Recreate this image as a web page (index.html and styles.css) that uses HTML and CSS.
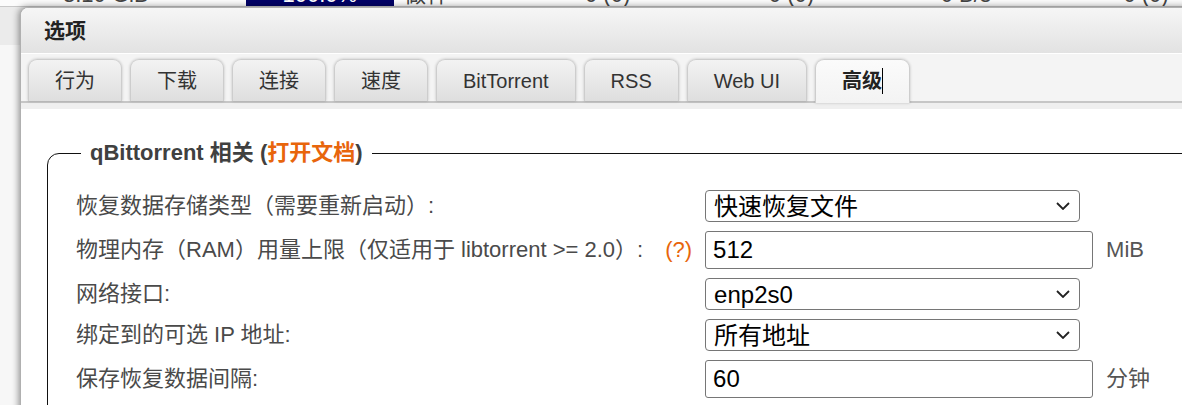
FILE: index.html
```html
<!DOCTYPE html>
<html lang="zh-CN">
<head>
<meta charset="utf-8">
<title>选项</title>
<link rel="stylesheet" href="styles.css">
</head>
<body>
<div class="page">
  <div class="bg-row">
    <div class="bg-row-inner">
      <div class="cell c1">3.10 GiB</div>
      <div class="cell c2">100.0%</div>
      <div class="cell c3">做种</div>
      <div class="cell c4">0 (0)</div>
      <div class="cell c5">0 (0)</div>
      <div class="cell c6">0 B/s</div>
      <div class="cell c7">0 (0)</div>
    </div>
  </div>
  <div class="bg-toolbar"></div>
</div>

<div class="window">
  <div class="titlebar">选项</div>
  <div class="tabbar">
    <div class="tab">行为</div>
    <div class="tab">下载</div>
    <div class="tab">连接</div>
    <div class="tab">速度</div>
    <div class="tab">BitTorrent</div>
    <div class="tab">RSS</div>
    <div class="tab">Web UI</div>
    <div class="tab active">高级<span class="caret"></span></div>
  </div>
  <div class="content">
    <fieldset class="group">
      <legend class="legend">qBittorrent 相关 (<a class="doc">打开文档</a>)</legend>
      <div class="rows">
        <label class="lbl">恢复数据存储类型（需要重新启动）:</label>
        <span class="selwrap">
          <select class="ctl sel"><option>快速恢复文件</option></select>
          <svg class="chev" width="14" height="8" viewBox="0 0 14 8"><path d="M1 1 L7 7 L13 1" fill="none" stroke="#222" stroke-width="1.8"/></svg>
        </span>
        <span class="unit"></span>

        <label class="lbl">物理内存（RAM）用量上限（仅适用于 libtorrent &gt;= 2.0）:<span class="help">(?)</span></label>
        <input class="ctl txt" type="text" value="512">
        <span class="unit">MiB</span>

        <label class="lbl">网络接口:</label>
        <span class="selwrap">
          <select class="ctl sel"><option>enp2s0</option></select>
          <svg class="chev" width="14" height="8" viewBox="0 0 14 8"><path d="M1 1 L7 7 L13 1" fill="none" stroke="#222" stroke-width="1.8"/></svg>
        </span>
        <span class="unit"></span>

        <label class="lbl">绑定到的可选 IP 地址:</label>
        <span class="selwrap">
          <select class="ctl sel"><option>所有地址</option></select>
          <svg class="chev" width="14" height="8" viewBox="0 0 14 8"><path d="M1 1 L7 7 L13 1" fill="none" stroke="#222" stroke-width="1.8"/></svg>
        </span>
        <span class="unit"></span>

        <label class="lbl">保存恢复数据间隔:</label>
        <input class="ctl txt" type="text" value="60">
        <span class="unit">分钟</span>
      </div>
    </fieldset>
  </div>
</div>
</body>
</html>
```

FILE: styles.css
```css
html, body {
  margin: 0;
  padding: 0;
  overflow: hidden;
}

body {
  width: 1182px;
  height: 405px;
  position: relative;
  background: #f7f7f7;
  font-family: "Liberation Sans", "Noto Sans CJK SC", sans-serif;
}

.bg-row {
  height: 6px;
  border-bottom: 1px solid #c8c8c8;
  background: #fbfbfb;
  overflow: hidden;
}

.bg-row-inner {
  display: flex;
  margin-top: -20px;
  height: 30px;
  line-height: 30px;
  font-size: 22px;
  color: #444;
  white-space: nowrap;
}

.cell {
  box-sizing: border-box;
}

.c1 { width: 250px; padding-left: 63px; }
.c2 { width: 152px; background: #000066; color: #fff; text-align: center; }
.c3 { width: 185px; padding-left: 10px; }
.c4 { width: 188px; padding-left: 10px; }
.c5 { width: 186px; padding-left: 10px; }
.c6 { width: 187px; padding-left: 0; }
.c7 { width: 60px; padding-left: 0; }

.bg-toolbar {
  height: 38px;
  background: #ebebeb;
}

.window {
  position: absolute;
  left: 20px;
  top: 7px;
  width: 1280px;
  height: 440px;
  background: #fff;
  border: 1px solid #b0b0b0;
  border-radius: 8px 8px 0 0;
  box-shadow: -1px 0 7px rgba(0, 0, 0, 0.45);
  overflow: hidden;
}

.titlebar {
  height: 45px;
  line-height: 45px;
  padding-left: 23px;
  font-size: 21px;
  font-weight: bold;
  color: #222;
  background: linear-gradient(#f6f6f6, #e2e2e2);
  border-bottom: 1px solid #fff;
}

.tabbar {
  display: flex;
  align-items: flex-start;
  gap: 8px;
  height: 42px;
  padding: 5px 0 0 7px;
  background: #f4f4f4;
  border-bottom: 2px solid #c6c6c6;
}

.tab {
  box-sizing: border-box;
  height: 42px;
  line-height: 42px;
  padding: 0 26px;
  font-size: 20px;
  color: #333;
  background: linear-gradient(#f3f3f3, #dedede);
  border: 1px solid #cdcdcd;
  border-bottom: none;
  border-radius: 9px 9px 0 0;
  box-shadow: 0 0 3px rgba(0, 0, 0, 0.22);
  white-space: nowrap;
}

.tab.active {
  height: 44px;
  margin-bottom: -2px;
  font-weight: bold;
  color: #222;
  background: linear-gradient(#fbfbfb, #f3f3f3);
  position: relative;
  z-index: 1;
}

.caret {
  display: inline-block;
  width: 1px;
  height: 26px;
  background: #000;
  vertical-align: middle;
  margin-top: -3px;
}

.content {
  background: #fff;
  border-top: 6px solid #efefef;
  padding-left: 26px;
  height: 400px;
}

.group {
  margin: 31px 0 0 0;
  width: 1300px;
  border: 1px solid #111;
  border-radius: 12px;
  padding: 24px 0 40px 28px;
  min-width: 0;
}

.legend {
  margin-left: 5px;
  padding: 0 9px;
  font-size: 22px;
  line-height: 26px;
  font-weight: bold;
  color: #404040;
}

.doc {
  color: #e8650c;
}

.rows {
  display: grid;
  grid-template-columns: max-content max-content max-content;
  column-gap: 13px;
  row-gap: 9px;
  align-items: center;
}

.lbl {
  font-size: 22px;
  line-height: 28px;
  color: #4a4a4a;
  white-space: nowrap;
}

.help {
  margin-left: 22px;
  color: #e8650c;
}

.ctl {
  box-sizing: border-box;
  font-family: "Liberation Sans", "Noto Sans CJK SC", sans-serif;
  font-size: 24px;
  color: #000;
  background: #fff;
  border: 1px solid #767676;
  margin: 0;
}

.selwrap {
  position: relative;
  display: block;
  width: 375px;
  height: 32px;
}

.sel {
  display: block;
  width: 375px;
  height: 32px;
  padding: 0 4px 0 8px;
  border-radius: 4px;
  -webkit-appearance: none;
  appearance: none;
}

.chev {
  position: absolute;
  right: 10px;
  top: 12px;
  pointer-events: none;
}

.txt {
  width: 388px;
  height: 38px;
  padding: 0 7px;
  border-radius: 3px;
}

.unit {
  font-size: 22px;
  line-height: 28px;
  color: #555;
}
```
